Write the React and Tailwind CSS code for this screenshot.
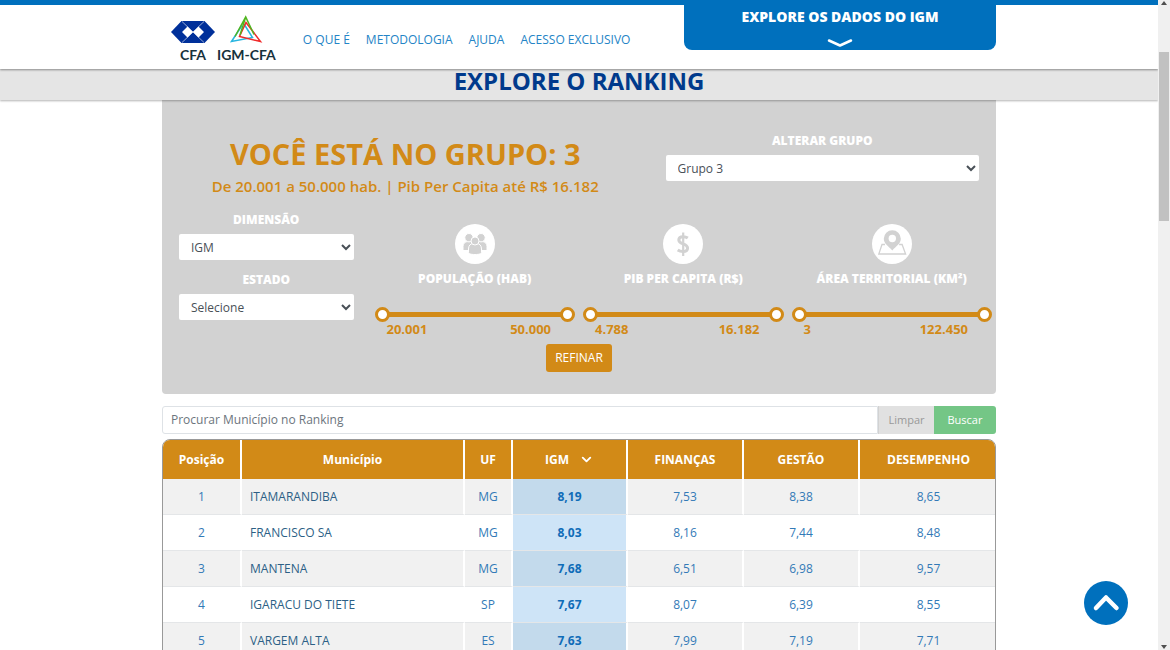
import { useState } from 'react'
import { ChevronDown } from 'lucide-react'
import clsx from 'clsx'

const NAV = ['O QUE É', 'METODOLOGIA', 'AJUDA', 'ACESSO EXCLUSIVO']

const COLUMNS = [
  { key: 'pos', label: 'Posição', width: 'w-[79px]' },
  { key: 'city', label: 'Município', width: 'w-[223px]' },
  { key: 'uf', label: 'UF', width: 'w-[48px]' },
  { key: 'igm', label: 'IGM', width: 'w-[115px]' },
  { key: 'fin', label: 'FINANÇAS', width: 'w-[116px]' },
  { key: 'ges', label: 'GESTÃO', width: 'w-[116px]' },
  { key: 'des', label: 'DESEMPENHO', width: 'w-[137px]' },
]

const ROWS = [
  { pos: 1, city: 'ITAMARANDIBA', uf: 'MG', igm: '8,19', fin: '7,53', ges: '8,38', des: '8,65' },
  { pos: 2, city: 'FRANCISCO SA', uf: 'MG', igm: '8,03', fin: '8,16', ges: '7,44', des: '8,48' },
  { pos: 3, city: 'MANTENA', uf: 'MG', igm: '7,68', fin: '6,51', ges: '6,98', des: '9,57' },
  { pos: 4, city: 'IGARACU DO TIETE', uf: 'SP', igm: '7,67', fin: '8,07', ges: '6,39', des: '8,55' },
  { pos: 5, city: 'VARGEM ALTA', uf: 'ES', igm: '7,63', fin: '7,99', ges: '7,19', des: '7,71' },
]

const PeopleIcon = () => (
  <svg viewBox="0 0 40 40" className="size-10" aria-hidden="true">
    <circle cx="20" cy="20" r="20" fill="#fff" />
    <g fill="#d2d2d2" stroke="#fff" strokeWidth="1">
      <path d="M8 26.5v-4c0-3 2-5 5-5h2.500c3 0 4 2 4 5v4z" />
      <path d="M32 26.500v-4c0-3-2-5-5-5h-2.500c-3 0-4 2-4 5v4z" />
      <circle cx="14" cy="13.700" r="4.200" />
      <circle cx="26" cy="13.700" r="4.200" />
      <path d="M13.500 28v-3c0-3.500 2-5.500 5-5.500h3c3 0 5 2 5 5.500v3c0 1.500-1.500 2.500-6.500 2.500s-6.500-1-6.500-2.500z" />
      <circle cx="20" cy="17" r="4" />
    </g>
  </svg>
)

const MoneyIcon = () => (
  <svg viewBox="0 0 40 40" className="size-10" aria-hidden="true">
    <circle cx="20" cy="20" r="20" fill="#fff" />
    <path
      d="M24.800 14c-1.300-.9-3-1.300-4.800-1.300-2.600 0-4.200 1.300-4.200 3.300 0 4.600 8.800 3 8.800 8 0 2.200-1.800 3.500-4.600 3.500-2 0-3.800-.5-5.300-1.500"
      fill="none" stroke="#d2d2d2" strokeWidth="3"
    />
    <path d="M20.200 8.500v23.500" stroke="#d2d2d2" strokeWidth="2.200" />
  </svg>
)

const MapIcon = () => (
  <svg viewBox="0 0 40 40" className="size-10" aria-hidden="true">
    <circle cx="20" cy="20" r="20" fill="#fff" />
    <path d="M13 20.500h-3L6.800 30h26.800l-3.500-9.500h-3" fill="none" stroke="#d2d2d2" strokeWidth="1.300" />
    <path
      d="M20.300 6.300a8.500 8.500 0 0 0-8.500 8.500c0 4.800 4.500 7.200 8.500 11.700 4-4.500 8.500-6.900 8.500-11.700a8.500 8.500 0 0 0-8.500-8.500z"
      fill="#d2d2d2"
    />
    <circle cx="20.300" cy="14.500" r="3.700" fill="#fff" />
  </svg>
)

const CfaLogo = () => (
  <svg viewBox="0 0 44 22" className="w-11 h-[22px]" aria-hidden="true">
    <path d="M0 11 10.500 0h23L44 11 33.500 22h-23z" fill="#00309a" />
    <path d="M11 .5 22 11 11 21.500M33 .5 22 11l11 10.500" fill="none" stroke="#fff" strokeWidth=".6" />
    <path d="m11 11 5.500-5.500L22 11l-5.500 5.500zM22 11l5.500-5.500L33 11l-5.500 5.500z" fill="#fff" />
  </svg>
)

const IgmLogo = () => (
  <svg viewBox="0 0 34 28" className="w-[34px] h-7" aria-hidden="true">
    <g fill="none" strokeWidth="1.500">
      <path d="M13 10.500 2.500 26.500 23.500 22.500 15 9" stroke="#27b5e0" />
      <path d="M17 7.500 31.500 26.500 10.500 21.500z" stroke="#f02a2a" />
      <path d="M6 21.500 16.700 2 25 19.500M16.700 2 11 20" stroke="#4fb51f" />
    </g>
  </svg>
)

const FILTERS = [
  { id: 'pop', label: 'POPULAÇÃO (HAB)', Icon: PeopleIcon, min: 20001, max: 50000 },
  { id: 'pib', label: 'PIB PER CAPITA (R$)', Icon: MoneyIcon, min: 4788, max: 16182 },
  { id: 'area', label: 'ÁREA TERRITORIAL (KM²)', Icon: MapIcon, min: 3, max: 122450 },
]

const thumb =
  'absolute inset-0 m-0 w-full h-4 appearance-none bg-transparent pointer-events-none [&::-webkit-slider-thumb]:pointer-events-auto [&::-webkit-slider-thumb]:appearance-none [&::-webkit-slider-thumb]:size-[15px] [&::-webkit-slider-thumb]:rounded-full [&::-webkit-slider-thumb]:border-3 [&::-webkit-slider-thumb]:border-[#d28a17] [&::-webkit-slider-thumb]:bg-white'

// de 20001 para 20.001
const format = (n) => String(n).replace(/\B(?=(\d{3})+$)/g, '.')

const RangeFilter = ({ id, label, Icon, min, max }) => {
  const [low, setLow] = useState(min)
  const [high, setHigh] = useState(max)

  return (
    <div className="flex flex-col items-center pt-[14px]">
      <Icon />
      <span id={`${id}-label`} className="mt-[5px] text-xs leading-5 font-extrabold text-white whitespace-nowrap">{label}</span>
      <div className="w-full px-1 mt-[17px]">
        <div className="relative h-4 flex items-center px-1">
          <div className="w-full h-[5px] bg-[#d28a17]" />
          <input
            type="range" aria-label={`${label} mínimo`} className={thumb}
            min={min} max={max} value={low}
            onChange={(e) => setLow(Math.min(Number(e.target.value), high))}
          />
          <input
            type="range" aria-label={`${label} máximo`} className={thumb}
            min={min} max={max} value={high}
            onChange={(e) => setHigh(Math.max(Number(e.target.value), low))}
          />
        </div>
      </div>
      <div className="w-full flex justify-between pl-4 pr-7 text-[13px] leading-[14px] font-bold text-[#d28a17]">
        <span>{format(low)}</span>
        <span>{format(high)}</span>
      </div>
    </div>
  )
}

const SelectField = ({ id, label, options }) => (
  <div className="flex flex-col">
    <label htmlFor={id} className="text-center text-xs leading-5 font-extrabold text-white">{label}</label>
    <select
      id={id}
      className="mt-1 h-[26px] w-full rounded-xs bg-white pl-2 text-xs text-[#495057]"
    >
      {options.map((o) => <option key={o}>{o}</option>)}
    </select>
  </div>
)

const Header = () => (
  <header className="relative z-10 bg-white border-t-5 border-[#0070bd] shadow-[0_1px_2px_rgba(0,0,0,0.4)]">
    <div className="max-w-[834px] mx-auto h-16 flex items-start">
      <a href="#inicio" className="flex items-end gap-[2px] pl-[9px] pt-[10px] font-[Lato,sans-serif] text-sm leading-4 font-bold text-[#17323c]">
        <span className="flex flex-col items-center gap-1">
          <CfaLogo />
          CFA
        </span>
        <span className="flex flex-col items-center gap-1">
          <IgmLogo />
          IGM-CFA
        </span>
      </a>
      <nav className="flex gap-4 pl-[27px] pt-[25px] text-xs leading-5 text-[#2484c6] whitespace-nowrap">
        {NAV.map((item) => <a key={item} href="#menu">{item}</a>)}
      </nav>
      <button className="ml-auto w-[312px] h-[45px] rounded-b-lg bg-[#0070bd] text-white text-sm leading-5 font-extrabold flex flex-col items-center pt-[2px]">
        EXPLORE OS DADOS DO IGM
        <svg viewBox="0 0 26 10" className="w-[26px] h-[10px] mt-[11px]" fill="none" stroke="currentColor" strokeWidth="2.500" strokeLinecap="round" strokeLinejoin="round" aria-hidden="true">
          <path d="M2 2.500 13 7.500 24 2.500" />
        </svg>
      </button>
    </div>
  </header>
)

const FilterPanel = () => (
  <section className="bg-[#d2d2d2] rounded-b-sm pt-[31px] pb-[22px]">
    <div className="grid grid-cols-12">
      <div className="col-span-7 text-center text-[#d28a17] whitespace-nowrap pt-[3px]">
        <h2 className="text-[29px] leading-10 font-bold">VOCÊ ESTÁ NO GRUPO: 3</h2>
        <p className="text-[15px] leading-6 font-semibold">De 20.001 a 50.000 hab. | Pib Per Capita até R$ 16.182</p>
      </div>
      <div className="col-span-5 px-[17px]">
        <SelectField id="grupo" label="ALTERAR GRUPO" options={['Grupo 3', 'Grupo 1', 'Grupo 2']} />
      </div>
    </div>
    <div className="grid grid-cols-4 mt-3">
      <div className="px-[17px] flex flex-col gap-[10px]">
        <SelectField id="dimensao" label="DIMENSÃO" options={['IGM', 'Finanças', 'Gestão', 'Desempenho']} />
        <SelectField id="estado" label="ESTADO" options={['Selecione', 'MG', 'SP', 'ES']} />
      </div>
      {FILTERS.map((f) => <RangeFilter key={f.id} {...f} />)}
    </div>
    <div className="flex justify-center mt-2">
      <button className="h-7 px-[9px] rounded-[3px] bg-[#d28a17] text-white text-xs">REFINAR</button>
    </div>
  </section>
)

const SearchBar = () => {
  const [query, setQuery] = useState('')

  return (
    <form className="flex h-7 mt-3" onSubmit={(e) => e.preventDefault()}>
      <input
        type="text"
        aria-label="Procurar Município no Ranking"
        placeholder="Procurar Município no Ranking"
        value={query}
        onChange={(e) => setQuery(e.target.value)}
        className="flex-1 min-w-0 px-2 rounded-l-[3px] border border-[#dee2e6] text-xs text-[#495057] placeholder:text-[#6c757d]"
      />
      <button type="button" onClick={() => setQuery('')} className="w-14 bg-[#e1e1e1] border-l border-[#d2d2d2] text-[11px] text-[#999]">Limpar</button>
      <button type="submit" className="w-[62px] rounded-r-[3px] bg-[#74c686] text-[11px] text-white">Buscar</button>
    </form>
  )
}

const RankingTable = () => (
  <div className="mt-[5px] rounded-t-lg border border-[#999] overflow-hidden">
    <table className="w-full table-fixed border-separate border-spacing-0 text-xs text-center">
      <thead>
        <tr className="h-[39px] bg-[#d28a17] text-white">
          {COLUMNS.map((c) => (
            <th key={c.key} className={clsx(c.width, 'font-bold border-r-2 border-white last:border-r-0')}>
              {c.key === 'igm' ? (
                <span className="inline-flex items-center gap-[10px]">
                  {c.label}
                  <ChevronDown size={15} strokeWidth={3} />
                </span>
              ) : c.label}
            </th>
          ))}
        </tr>
      </thead>
      <tbody>
        {ROWS.map((row) => (
          <tr key={row.pos} className="group h-9 text-[#337ab7] odd:bg-[#f1f1f1]">
            {COLUMNS.map((c) => (
              <td
                key={c.key}
                className={clsx(
                  'border-b border-b-[#e4e6e8] border-r-2 border-r-white last:border-r-0',
                  c.key === 'city' && 'text-left pl-2 text-[#2c5f86]',
                  c.key === 'igm' && 'font-bold text-[#0f6cb8] bg-[#cee4f7] group-odd:bg-[#c3daec]',
                )}
              >
                {row[c.key]}
              </td>
            ))}
          </tr>
        ))}
      </tbody>
    </table>
  </div>
)

const ScrollRail = () => (
  <div className="w-3 shrink-0 bg-[#f0f0f0] flex flex-col items-center" aria-hidden="true">
    <svg viewBox="0 0 12 6" className="w-3 h-[6px]"><path d="M6 1 9 5H3z" fill="#505050" /></svg>
    <div className="h-[7%]" />
    <div className="w-[10px] h-[26%] bg-[#c1c1c1]" />
    <svg viewBox="0 0 12 6" className="w-3 h-[6px] mt-auto"><path d="M3 1h6L6 5z" fill="#505050" /></svg>
  </div>
)

export default function App() {
  return (
    <div className="h-screen flex overflow-hidden bg-white font-['Open_Sans',sans-serif]">
      <div className="flex-1 min-w-0 overflow-hidden">
        <Header />
        <div className="bg-[#e5e5e5] h-[31px] shadow-[0_1px_2px_rgba(0,0,0,0.3)] relative">
          <h1 className="text-center text-2xl leading-6 font-bold text-[#003a8c]">EXPLORE O RANKING</h1>
        </div>
        <main className="max-w-[834px] mx-auto">
          <FilterPanel />
          <SearchBar />
          <RankingTable />
        </main>
      </div>
      <ScrollRail />
      <button aria-label="Voltar ao topo" className="fixed right-[42px] bottom-[25px] size-11 rounded-full bg-[#0070bd] text-white">
        <svg viewBox="0 0 44 44" className="size-11" fill="none" stroke="currentColor" strokeWidth="4.500" strokeLinecap="round" strokeLinejoin="round" aria-hidden="true">
          <path d="M12 27 22 16.500 32.500 27" />
        </svg>
      </button>
    </div>
  )
}
